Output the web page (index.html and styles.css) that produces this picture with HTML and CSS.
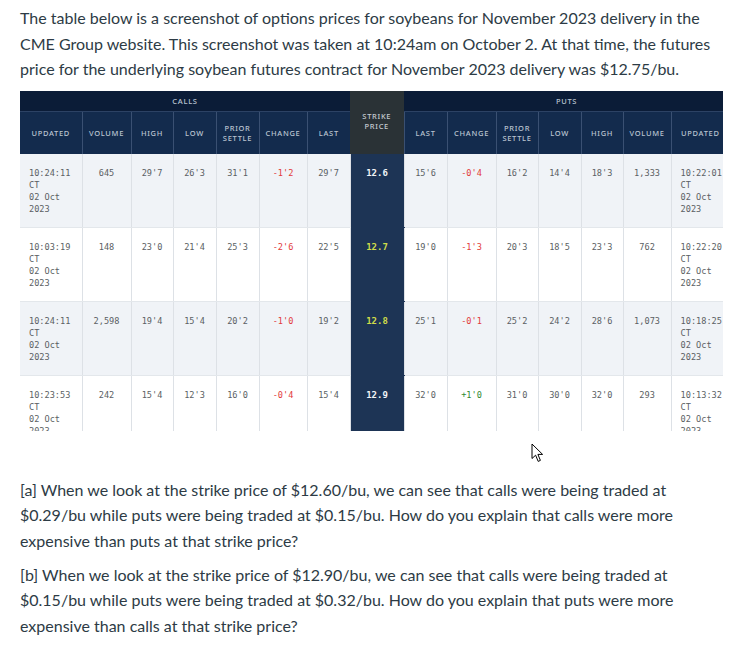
FILE: index.html
```html
<!DOCTYPE html>
<html lang="en">
<head>
<meta charset="utf-8">
<title>Soybean options</title>
<link rel="stylesheet" href="styles.css">
</head>
<body>
<main class="page">
  <p class="intro">The table below is a screenshot of options prices for soybeans for November 2023 delivery in the CME Group website. This screenshot was taken at 10:24am on October 2. At that time, the futures price for the underlying soybean futures contract for November 2023 delivery was $12.75/bu.</p>

  <figure class="shot">
    <div class="clip">
      <table class="chain">
        <colgroup>
          <col class="w-upd"><col class="w-vol"><col class="w-hi"><col class="w-lo"><col class="w-ps"><col class="w-chg"><col class="w-last">
          <col class="w-strike">
          <col class="w-last"><col class="w-chg2"><col class="w-ps2"><col class="w-lo"><col class="w-hi"><col class="w-vol2"><col class="w-upd2">
        </colgroup>
        <thead>
          <tr class="group">
            <th colspan="7">CALLS</th>
            <th rowspan="2" class="strike-head">STRIKE<br>PRICE</th>
            <th colspan="7">PUTS</th>
          </tr>
          <tr class="cols">
            <th>UPDATED</th><th>VOLUME</th><th>HIGH</th><th>LOW</th><th>PRIOR<br>SETTLE</th><th>CHANGE</th><th>LAST</th>
            <th>LAST</th><th>CHANGE</th><th>PRIOR<br>SETTLE</th><th>LOW</th><th>HIGH</th><th>VOLUME</th><th>UPDATED</th>
          </tr>
        </thead>
        <tbody>
          <tr class="shade">
            <td class="upd">10:24:11<br>CT<br>02 Oct<br>2023</td><td>645</td><td>29'7</td><td>26'3</td><td>31'1</td><td class="neg">-1'2</td><td>29'7</td>
            <td class="strike">12.6</td>
            <td>15'6</td><td class="neg">-0'4</td><td>16'2</td><td>14'4</td><td>18'3</td><td>1,333</td><td class="upd">10:22:01<br>CT<br>02 Oct<br>2023</td>
          </tr>
          <tr>
            <td class="upd">10:03:19<br>CT<br>02 Oct<br>2023</td><td>148</td><td>23'0</td><td>21'4</td><td>25'3</td><td class="neg">-2'6</td><td>22'5</td>
            <td class="strike itm">12.7</td>
            <td>19'0</td><td class="neg">-1'3</td><td>20'3</td><td>18'5</td><td>23'3</td><td>762</td><td class="upd">10:22:20<br>CT<br>02 Oct<br>2023</td>
          </tr>
          <tr class="shade">
            <td class="upd">10:24:11<br>CT<br>02 Oct<br>2023</td><td>2,598</td><td>19'4</td><td>15'4</td><td>20'2</td><td class="neg">-1'0</td><td>19'2</td>
            <td class="strike itm">12.8</td>
            <td>25'1</td><td class="neg">-0'1</td><td>25'2</td><td>24'2</td><td>28'6</td><td>1,073</td><td class="upd">10:18:25<br>CT<br>02 Oct<br>2023</td>
          </tr>
          <tr>
            <td class="upd">10:23:53<br>CT<br>02 Oct<br>2023</td><td>242</td><td>15'4</td><td>12'3</td><td>16'0</td><td class="neg">-0'4</td><td>15'4</td>
            <td class="strike">12.9</td>
            <td>32'0</td><td class="pos">+1'0</td><td>31'0</td><td>30'0</td><td>32'0</td><td>293</td><td class="upd">10:13:32<br>CT<br>02 Oct<br>2023</td>
          </tr>
        </tbody>
      </table>
    </div>
    <svg class="cursor" width="13" height="20" viewBox="0 0 13 20" aria-hidden="true">
      <path d="M1 1 L1 15.5 L4.6 12.2 L7.2 18.4 L9.4 17.4 L6.9 11.4 L11.6 11.4 Z" fill="#fff" stroke="#000" stroke-width="1" stroke-linejoin="round"/>
    </svg>
  </figure>

  <p class="question">[a] When we look at the strike price of $12.60/bu, we can see that calls were being traded at $0.29/bu while puts were being traded at $0.15/bu. How do you explain that calls were more expensive than puts at that strike price?</p>
  <p class="question">[b] When we look at the strike price of $12.90/bu, we can see that calls were being traded at $0.15/bu while puts were being traded at $0.32/bu. How do you explain that puts were more expensive than calls at that strike price?</p>
</main>
</body>
</html>
```

FILE: styles.css
```css
* { box-sizing: border-box; }

html, body {
  margin: 0;
  background: #fff;
}

.page {
  padding: 5px 0 0 20px;
  width: 723px;
  font-family: Lato, "Open Sans", sans-serif;
  font-size: 16px;
  line-height: 25.6px;
  color: #2d3b45;
}

.intro {
  margin: 0 0 9px;
}

.question {
  margin: 0 0 8px;
}

.shot {
  position: relative;
  margin: 0;
  height: 386px;
}

.clip {
  width: 703px;
  height: 340px;
  overflow: hidden;
}

.chain {
  table-layout: fixed;
  width: 709px;
  border-collapse: collapse;
  border-spacing: 0;
}

.w-upd { width: 62px; }
.w-vol { width: 49px; }
.w-hi { width: 42px; }
.w-lo { width: 43px; }
.w-ps { width: 43px; }
.w-chg { width: 48px; }
.w-last { width: 43px; }
.w-strike { width: 54px; }
.w-chg2 { width: 49px; }
.w-ps2 { width: 42px; }
.w-vol2 { width: 48px; }
.w-upd2 { width: 58px; }

.chain th {
  font-family: "Noto Sans", "Open Sans", sans-serif;
  font-weight: 500;
  font-size: 7.5px;
  line-height: 10px;
  letter-spacing: 0.7px;
  color: #b9c3d0;
  text-align: center;
  vertical-align: middle;
  padding: 0;
  white-space: nowrap;
}

.group th {
  height: 21px;
  background: #0b1c37;
}

.cols th {
  height: 42px;
  background: #132b4d;
  border-top: 1px solid #2c4264;
  border-left: 1px solid #3a5072;
}

.cols th:first-child {
  border-left: none;
}

.chain th.strike-head {
  background: #2a3236;
  color: #c5cbd1;
  padding-bottom: 2px;
}

.chain td {
  font-family: "DejaVu Sans Mono", "Liberation Mono", monospace;
  font-size: 8.6px;
  line-height: 12px;
  color: #5b5f64;
  text-align: center;
  vertical-align: top;
  height: 74px;
  padding: 13px 2px 0;
  border-right: 1px solid #dde1e6;
  border-bottom: 1px solid #e3e7eb;
  white-space: nowrap;
}

.chain tbody tr {
  background: #fff;
}

.chain tbody tr.shade {
  background: #f0f3f7;
}

.chain td.upd {
  text-align: left;
  padding-left: 9px;
}

.chain td.neg { color: #e23b3b; }
.chain td.pos { color: #2f8a2f; }

.chain td.strike {
  background: #1d3455;
  color: #f2f4f7;
  font-weight: bold;
  font-size: 9px;
  border-bottom-color: #1d3455;
}

.chain td.strike.itm {
  color: #cfdc4a;
}

.cursor {
  position: absolute;
  left: 511px;
  top: 352px;
}
```
